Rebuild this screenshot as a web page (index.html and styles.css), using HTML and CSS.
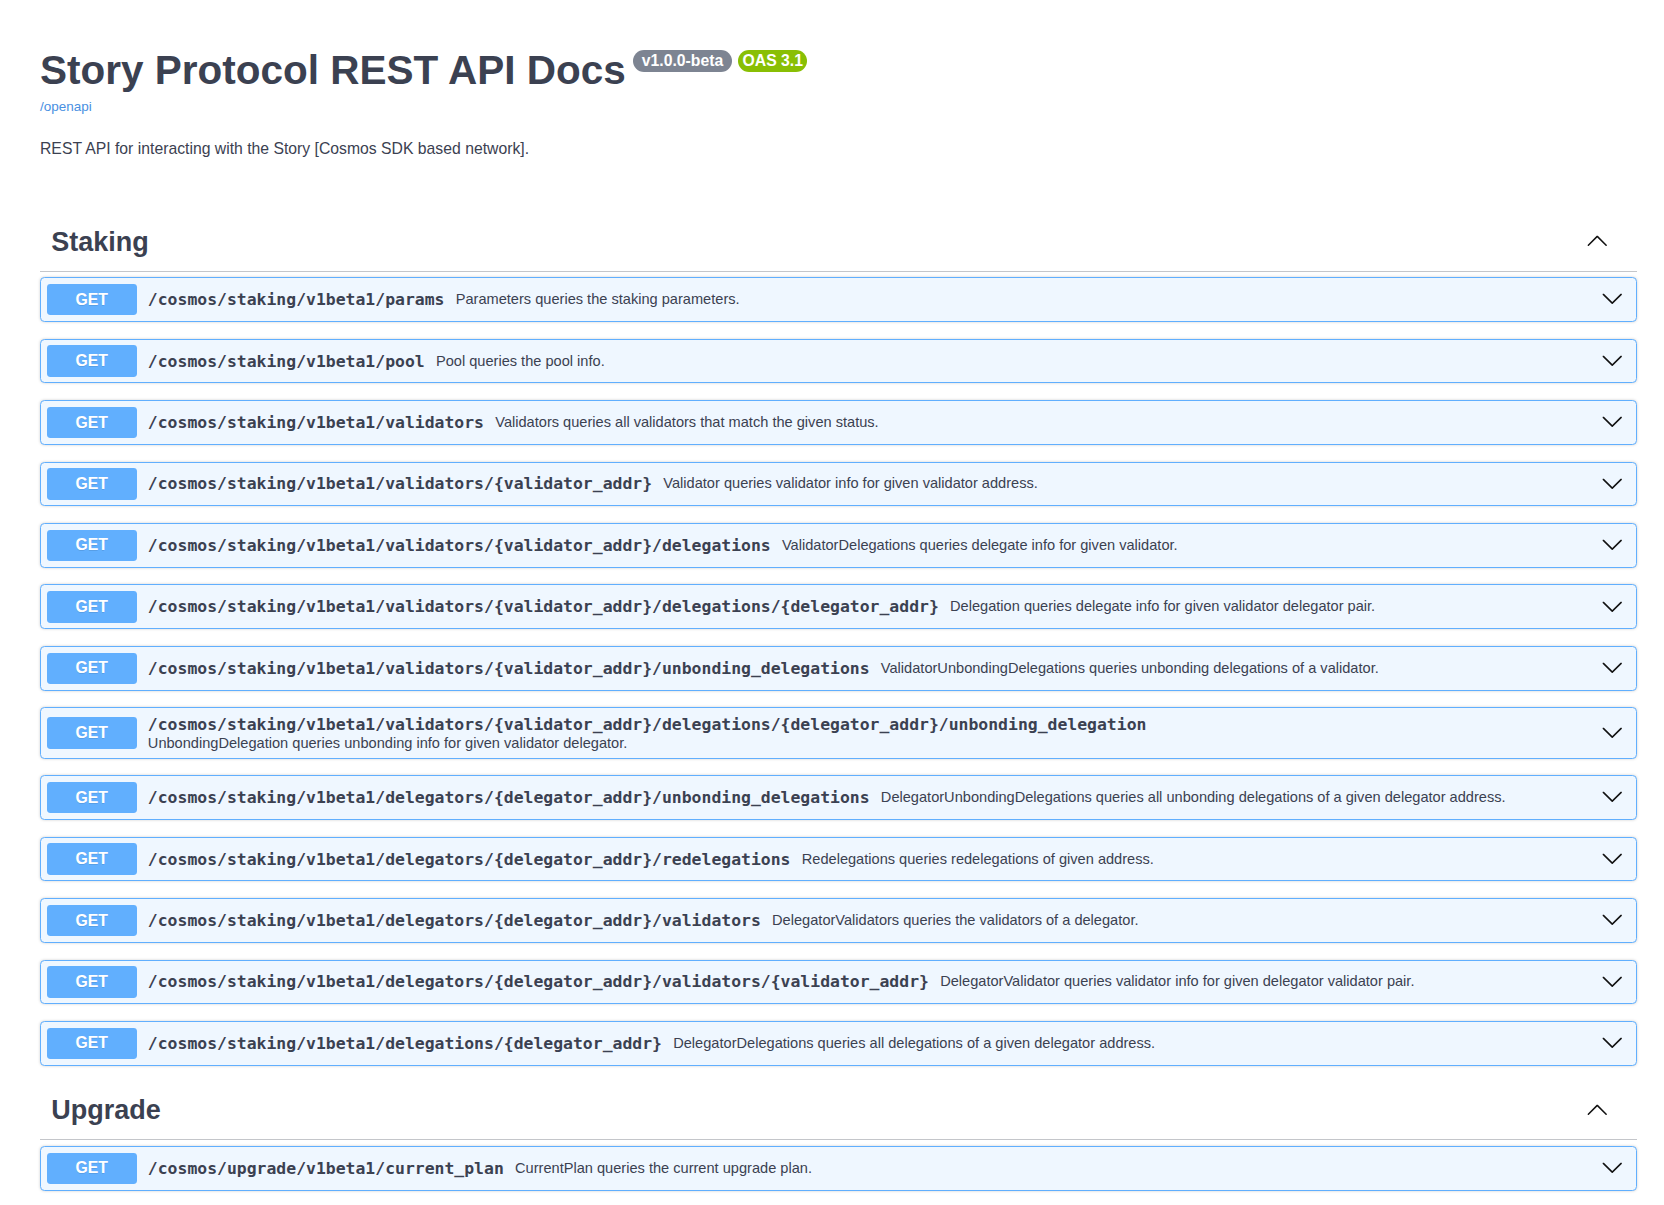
FILE: index.html
```html
<!DOCTYPE html>
<html lang="en">
<head>
<meta charset="utf-8">
<title>Story Protocol REST API Docs</title>
<link rel="stylesheet" href="styles.css">
</head>
<body>
<div class="swagger">
  <section class="info">
    <hgroup class="main">
      <h2 class="title"><span class="title-text">Story Protocol REST API Docs</span><small class="badge version"><pre> v1.0.0-beta </pre></small><small class="badge stamp"><pre>OAS 3.1</pre></small></h2>
      <a class="url" href="#">/openapi</a>
    </hgroup>
    <div class="description"><p>REST API for interacting with the Story [Cosmos SDK based network].</p></div>
  </section>

  <section class="tag-section">
    <h3 class="tag"><span class="tag-name">Staking</span><span class="tag-spacer"></span><svg class="arrow-up" viewBox="0 0 20 20"><path d="M17.418 14.908c.272.268.709.268.979 0s.271-.701 0-.969l-7.908-7.83c-.27-.268-.707-.268-.979 0l-7.908 7.83c-.27.268-.27.701 0 .969.271.268.709.268.979 0L10 7.665l7.418 7.243z"/></svg></h3>

    <div class="opblock"><div class="summary"><span class="method">GET</span><div class="pd"><span class="path">/cosmos/staking/v1beta1/params</span><div class="desc">Parameters queries the staking parameters.</div></div><svg class="arrow" viewBox="0 0 20 20"><path d="M17.418 6.109c.272-.268.709-.268.979 0s.271.701 0 .969l-7.908 7.83c-.27.268-.707.268-.979 0l-7.908-7.83c-.27-.268-.27-.701 0-.969.271-.268.709-.268.979 0L10 13.25l7.418-7.141z"/></svg></div></div>

    <div class="opblock"><div class="summary"><span class="method">GET</span><div class="pd"><span class="path">/cosmos/staking/v1beta1/pool</span><div class="desc">Pool queries the pool info.</div></div><svg class="arrow" viewBox="0 0 20 20"><path d="M17.418 6.109c.272-.268.709-.268.979 0s.271.701 0 .969l-7.908 7.83c-.27.268-.707.268-.979 0l-7.908-7.830c-.27-.268-.27-.701 0-.969.271-.268.709-.268.979 0L10 13.25l7.418-7.141z"/></svg></div></div>

    <div class="opblock"><div class="summary"><span class="method">GET</span><div class="pd"><span class="path">/cosmos/staking/v1beta1/validators</span><div class="desc">Validators queries all validators that match the given status.</div></div><svg class="arrow" viewBox="0 0 20 20"><path d="M17.418 6.109c.272-.268.709-.268.979 0s.271.701 0 .969l-7.908 7.83c-.27.268-.707.268-.979 0l-7.908-7.83c-.27-.268-.27-.701 0-.969.271-.268.709-.268.979 0L10 13.25l7.418-7.141z"/></svg></div></div>

    <div class="opblock"><div class="summary"><span class="method">GET</span><div class="pd"><span class="path">/cosmos/staking/v1beta1/validators/{validator_addr}</span><div class="desc">Validator queries validator info for given validator address.</div></div><svg class="arrow" viewBox="0 0 20 20"><path d="M17.418 6.109c.272-.268.709-.268.979 0s.271.701 0 .969l-7.908 7.83c-.27.268-.707.268-.979 0l-7.908-7.83c-.27-.268-.27-.701 0-.969.271-.268.709-.268.979 0L10 13.25l7.418-7.141z"/></svg></div></div>

    <div class="opblock"><div class="summary"><span class="method">GET</span><div class="pd"><span class="path">/cosmos/staking/v1beta1/validators/{validator_addr}/delegations</span><div class="desc">ValidatorDelegations queries delegate info for given validator.</div></div><svg class="arrow" viewBox="0 0 20 20"><path d="M17.418 6.109c.272-.268.709-.268.979 0s.271.701 0 .969l-7.908 7.83c-.27.268-.707.268-.979 0l-7.908-7.83c-.27-.268-.27-.701 0-.969.271-.268.709-.268.979 0L10 13.25l7.418-7.141z"/></svg></div></div>

    <div class="opblock"><div class="summary"><span class="method">GET</span><div class="pd"><span class="path">/cosmos/staking/v1beta1/validators/{validator_addr}/delegations/{delegator_addr}</span><div class="desc">Delegation queries delegate info for given validator delegator pair.</div></div><svg class="arrow" viewBox="0 0 20 20"><path d="M17.418 6.109c.272-.268.709-.268.979 0s.271.701 0 .969l-7.908 7.83c-.27.268-.707.268-.979 0l-7.908-7.83c-.27-.268-.27-.701 0-.969.271-.268.709-.268.979 0L10 13.25l7.418-7.141z"/></svg></div></div>

    <div class="opblock"><div class="summary"><span class="method">GET</span><div class="pd"><span class="path">/cosmos/staking/v1beta1/validators/{validator_addr}/unbonding_delegations</span><div class="desc">ValidatorUnbondingDelegations queries unbonding delegations of a validator.</div></div><svg class="arrow" viewBox="0 0 20 20"><path d="M17.418 6.109c.272-.268.709-.268.979 0s.271.701 0 .969l-7.908 7.83c-.27.268-.707.268-.979 0l-7.908-7.83c-.27-.268-.27-.701 0-.969.271-.268.709-.268.979 0L10 13.25l7.418-7.141z"/></svg></div></div>

    <div class="opblock"><div class="summary"><span class="method">GET</span><div class="pd"><span class="path">/cosmos/staking/v1beta1/validators/{validator_addr}/delegations/{delegator_addr}/unbonding_delegation</span><div class="desc">UnbondingDelegation queries unbonding info for given validator delegator.</div></div><svg class="arrow" viewBox="0 0 20 20"><path d="M17.418 6.109c.272-.268.709-.268.979 0s.271.701 0 .969l-7.908 7.83c-.27.268-.707.268-.979 0l-7.908-7.83c-.27-.268-.27-.701 0-.969.271-.268.709-.268.979 0L10 13.25l7.418-7.141z"/></svg></div></div>

    <div class="opblock"><div class="summary"><span class="method">GET</span><div class="pd"><span class="path">/cosmos/staking/v1beta1/delegators/{delegator_addr}/unbonding_delegations</span><div class="desc">DelegatorUnbondingDelegations queries all unbonding delegations of a given delegator address.</div></div><svg class="arrow" viewBox="0 0 20 20"><path d="M17.418 6.109c.272-.268.709-.268.979 0s.271.701 0 .969l-7.908 7.83c-.27.268-.707.268-.979 0l-7.908-7.83c-.27-.268-.27-.701 0-.969.271-.268.709-.268.979 0L10 13.25l7.418-7.141z"/></svg></div></div>

    <div class="opblock"><div class="summary"><span class="method">GET</span><div class="pd"><span class="path">/cosmos/staking/v1beta1/delegators/{delegator_addr}/redelegations</span><div class="desc">Redelegations queries redelegations of given address.</div></div><svg class="arrow" viewBox="0 0 20 20"><path d="M17.418 6.109c.272-.268.709-.268.979 0s.271.701 0 .969l-7.908 7.83c-.27.268-.707.268-.979 0l-7.908-7.83c-.27-.268-.27-.701 0-.969.271-.268.709-.268.979 0L10 13.25l7.418-7.141z"/></svg></div></div>

    <div class="opblock"><div class="summary"><span class="method">GET</span><div class="pd"><span class="path">/cosmos/staking/v1beta1/delegators/{delegator_addr}/validators</span><div class="desc">DelegatorValidators queries the validators of a delegator.</div></div><svg class="arrow" viewBox="0 0 20 20"><path d="M17.418 6.109c.272-.268.709-.268.979 0s.271.701 0 .969l-7.908 7.83c-.27.268-.707.268-.979 0l-7.908-7.83c-.27-.268-.27-.701 0-.969.271-.268.709-.268.979 0L10 13.25l7.418-7.141z"/></svg></div></div>

    <div class="opblock"><div class="summary"><span class="method">GET</span><div class="pd"><span class="path">/cosmos/staking/v1beta1/delegators/{delegator_addr}/validators/{validator_addr}</span><div class="desc">DelegatorValidator queries validator info for given delegator validator pair.</div></div><svg class="arrow" viewBox="0 0 20 20"><path d="M17.418 6.109c.272-.268.709-.268.979 0s.271.701 0 .969l-7.908 7.83c-.27.268-.707.268-.979 0l-7.908-7.83c-.27-.268-.27-.701 0-.969.271-.268.709-.268.979 0L10 13.25l7.418-7.141z"/></svg></div></div>

    <div class="opblock"><div class="summary"><span class="method">GET</span><div class="pd"><span class="path">/cosmos/staking/v1beta1/delegations/{delegator_addr}</span><div class="desc">DelegatorDelegations queries all delegations of a given delegator address.</div></div><svg class="arrow" viewBox="0 0 20 20"><path d="M17.418 6.109c.272-.268.709-.268.979 0s.271.701 0 .969l-7.908 7.83c-.27.268-.707.268-.979 0l-7.908-7.83c-.27-.268-.27-.701 0-.969.271-.268.709-.268.979 0L10 13.25l7.418-7.141z"/></svg></div></div>
  </section>

  <section class="tag-section">
    <h3 class="tag"><span class="tag-name">Upgrade</span><span class="tag-spacer"></span><svg class="arrow-up" viewBox="0 0 20 20"><path d="M17.418 14.908c.272.268.709.268.979 0s.271-.701 0-.969l-7.908-7.83c-.27-.268-.707-.268-.979 0l-7.908 7.83c-.27.268-.27.701 0 .969.271.268.709.268.979 0L10 7.665l7.418 7.243z"/></svg></h3>

    <div class="opblock"><div class="summary"><span class="method">GET</span><div class="pd"><span class="path">/cosmos/upgrade/v1beta1/current_plan</span><div class="desc">CurrentPlan queries the current upgrade plan.</div></div><svg class="arrow" viewBox="0 0 20 20"><path d="M17.418 6.109c.272-.268.709-.268.979 0s.271.701 0 .969l-7.908 7.83c-.27.268-.707.268-.979 0l-7.908-7.83c-.27-.268-.27-.701 0-.969.271-.268.709-.268.979 0L10 13.25l7.418-7.141z"/></svg></div></div>
  </section>
</div>
</body>
</html>
```

FILE: styles.css
```css
html, body {
  margin: 0;
  padding: 0;
  background: #ffffff;
}

body {
  font-family: "Liberation Sans", Arial, sans-serif;
  color: #3b4151;
}

.swagger {
  padding: 0 27px 0 40px;
}

/* ---------- info ---------- */
.info {
  padding-top: 47px;
  margin-bottom: 53px;
}

.main {
  margin: 0 0 23px 0;
}

.title {
  display: flex;
  align-items: flex-start;
  margin: 0;
  font-size: 40.5px;
  line-height: 46.6px;
  font-weight: bold;
  color: #3b4151;
}

.title-text {
  margin-right: 7px;
}

.badge {
  margin-top: 3px;
  margin-right: 6px;
  padding: 2.25px 4.5px;
  border-radius: 64px;
  background: #7d8492;
  font-size: 15.75px;
  line-height: 17.5px;
}

.badge pre {
  margin: 0;
  font-family: "Liberation Sans", Arial, sans-serif;
  font-weight: bold;
  color: #ffffff;
}

.badge.stamp {
  background: #89bf04;
}

.url {
  display: block;
  margin-top: 5px;
  font-size: 13.5px;
  line-height: 15.5px;
  color: #4990e2;
  text-decoration: none;
}

.description p {
  margin: 0;
  font-size: 15.75px;
  line-height: 23.6px;
  color: #3b4151;
}

/* ---------- tags ---------- */
.tag {
  display: flex;
  align-items: center;
  height: 34px;
  margin: 0 0 5.6px 0;
  padding: 11.5px 28.75px 11.5px 11.25px;
  border-bottom: 1px solid rgba(59, 65, 81, 0.3);
  font-size: 27px;
  line-height: 31px;
  font-weight: bold;
  color: #3b4151;
}

.tag-spacer {
  flex: 1;
}

.arrow-up {
  width: 22.5px;
  height: 22.5px;
  margin-bottom: 3px;
  fill: #111111;
  flex: none;
}

/* ---------- operations ---------- */
.opblock {
  margin: 0 0 16.75px 0;
  border: 1px solid #61affe;
  border-radius: 4.5px;
  background: #eff7ff;
  box-shadow: 0 0 3px rgba(0, 0, 0, 0.19);
}

.summary {
  display: flex;
  align-items: center;
  padding: 5.6px;
}

.method {
  flex: none;
  min-width: 90px;
  padding: 6.75px 0;
  border-radius: 3.4px;
  background: #61affe;
  color: #ffffff;
  font-size: 15.75px;
  line-height: 18px;
  font-weight: bold;
  text-align: center;
  text-shadow: 0 1px 0 rgba(0, 0, 0, 0.1);
}

.pd {
  flex: 1;
  min-width: 0;
  display: flex;
  flex-wrap: wrap;
  align-items: center;
  column-gap: 11.25px;
  padding: 0 11.25px;
}

.path {
  white-space: nowrap;
  font-family: "DejaVu Sans Mono", "Liberation Mono", monospace;
  font-size: 16.43px;
  line-height: 21px;
  font-weight: bold;
  color: #3b4151;
}

.desc {
  font-size: 14.6px;
  line-height: 17px;
  color: #3b4151;
}

.arrow {
  flex: none;
  width: 22.5px;
  height: 22.5px;
  margin-right: 7px;
  margin-bottom: 2px;
  fill: #111111;
}
```
